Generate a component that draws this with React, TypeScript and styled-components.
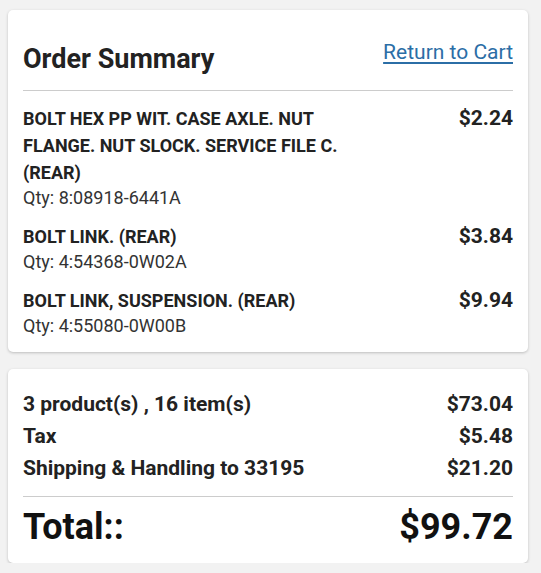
import React from "react";
import styled, { createGlobalStyle } from "styled-components";

const Global = createGlobalStyle`
  html, body { margin: 0; padding: 0; background: #f2f2f2; }
  body { font-family: Roboto, "Liberation Sans", Arial, sans-serif; color: #222; }
`;

const Page = styled.div`
  padding: 10px 0 0 8px;
  display: flex;
  flex-direction: column;
  gap: 17px;
  width: 520px;
`;

const Card = styled.section<{ $pad: string }>`
  background: #fff;
  border-radius: 5px;
  box-shadow: 0 1px 3px rgba(0, 0, 0, 0.22);
  padding: ${(p) => p.$pad};
`;

const Header = styled.div`
  display: flex;
  justify-content: space-between;
  align-items: flex-start;
  padding: 33px 0 15px;
  border-bottom: 1px solid #ccc;
`;

const Title = styled.h2`
  margin: 0;
  font-size: 27px;
  font-weight: 700;
  line-height: 32px;
  color: #222;
`;

const CartLink = styled.a`
  font-size: 21px;
  line-height: 24px;
  color: #2b6ea6;
  text-decoration: underline;
  text-underline-offset: 3px;
  margin-top: -3px;
  cursor: pointer;
`;

const Items = styled.div`
  display: flex;
  flex-direction: column;
  gap: 13px;
  padding-top: 14px;
`;

const Item = styled.div`
  display: flex;
  justify-content: space-between;
  align-items: flex-start;
  gap: 20px;
`;

const ItemInfo = styled.div`
  display: flex;
  flex-direction: column;
`;

const ItemName = styled.div`
  font-size: 18px;
  font-weight: 700;
  line-height: 27px;
  white-space: pre-line;
`;

const Qty = styled.div`
  font-size: 18px;
  line-height: 24px;
  color: #333;
`;

const Price = styled.div`
  font-size: 21px;
  font-weight: 700;
  line-height: 27px;
  white-space: nowrap;
`;

const Lines = styled.div`
  display: flex;
  flex-direction: column;
  padding-bottom: 12px;
  border-bottom: 1px solid #ccc;
`;

const Line = styled.div`
  display: flex;
  justify-content: space-between;
  font-size: 21px;
  font-weight: 700;
  line-height: 32px;
`;

const TotalRow = styled.div`
  display: flex;
  justify-content: space-between;
  font-size: 36px;
  font-weight: 700;
  line-height: 50px;
  padding-top: 5px;
  color: #111;
`;

const items = [
  { name: "BOLT HEX PP WIT. CASE AXLE. NUT\nFLANGE. NUT SLOCK. SERVICE FILE C.\n(REAR)", qty: "8:08918-6441A", price: "$2.24" },
  { name: "BOLT LINK. (REAR)", qty: "4:54368-0W02A", price: "$3.84" },
  { name: "BOLT LINK, SUSPENSION. (REAR)", qty: "4:55080-0W00B", price: "$9.94" },
];

const lines = [
  { label: "3 product(s) , 16 item(s)", value: "$73.04" },
  { label: "Tax", value: "$5.48" },
  { label: "Shipping & Handling to 33195", value: "$21.20" },
];

export default function App() {
  return (
    <>
      <Global />
      <Page>
        <Card $pad="0 15px 14px">
          <Header>
            <Title>Order Summary</Title>
            <CartLink>Return to Cart</CartLink>
          </Header>
          <Items>
            {items.map((it) => (
              <Item key={it.qty}>
                <ItemInfo>
                  <ItemName>{it.name}</ItemName>
                  <Qty>Qty: {it.qty}</Qty>
                </ItemInfo>
                <Price>{it.price}</Price>
              </Item>
            ))}
          </Items>
        </Card>
        <Card $pad="19px 15px 11px">
          <Lines>
            {lines.map((l) => (
              <Line key={l.label}>
                <span>{l.label}</span>
                <span>{l.value}</span>
              </Line>
            ))}
          </Lines>
          <TotalRow>
            <span>Total::</span>
            <span>$99.72</span>
          </TotalRow>
        </Card>
      </Page>
    </>
  );
}
